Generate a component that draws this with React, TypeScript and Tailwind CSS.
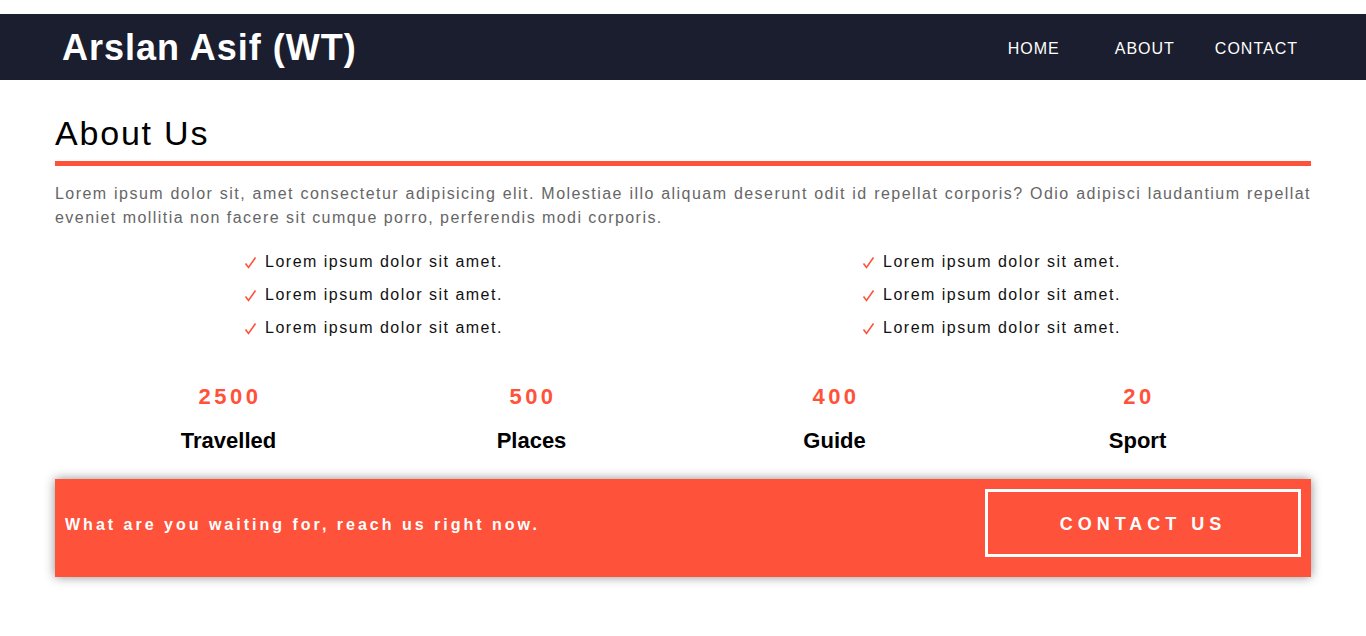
const checks = ["Lorem ipsum dolor sit amet.", "Lorem ipsum dolor sit amet.", "Lorem ipsum dolor sit amet."]

const stats = [
  { num: "2500", label: "Travelled" },
  { num: "500", label: "Places" },
  { num: "400", label: "Guide" },
  { num: "20", label: "Sport" },
]

function CheckList({ className }: { className: string }) {
  return (
    <ul className={className}>
      {checks.map((c, i) => (
        <li key={i} className="flex items-center h-[33px] text-[16px] tracking-[1.5px] text-[#111]">
          <svg width="13" height="13" viewBox="0 0 13 13" className="mr-[8px] mt-[2px]">
            <path d="M1.5 7.5 L4.5 11.5 L11.5 1.5" fill="none" stroke="#ff523b" strokeWidth="1.6" />
          </svg>
          {c}
        </li>
      ))}
    </ul>
  )
}

export default function App() {
  return (
    <div className="min-h-screen bg-white pt-[14px] font-['Liberation_Sans',Arial,sans-serif]">
      <header className="h-[66px] bg-[#1b1e2e] flex items-center justify-between pl-[62px] pr-[68px]">
        <h1 className="text-white text-[36px] font-bold tracking-[1px] leading-none mt-[1px]">Arslan Asif (WT)</h1>
        <nav className="flex items-center text-white text-[16px] tracking-[1px] mt-[4px]">
          <a className="mr-[55px]">HOME</a>
          <a className="mr-[40px]">ABOUT</a>
          <a>CONTACT</a>
        </nav>
      </header>

      <main className="px-[55px]">
        <h2 className="mt-[33px] text-[34px] leading-[40px] tracking-[1.8px] text-black pb-[8px] border-b-[5px] border-[#ff523b]">
          About Us
        </h2>
        <p className="mt-[16px] text-[16px] leading-[24px] tracking-[1.45px] text-[#666] text-justify">
          Lorem ipsum dolor sit, amet consectetur adipisicing elit. Molestiae illo aliquam deserunt odit id repellat
          corporis? Odio adipisci laudantium repellat eveniet mollitia non facere sit cumque porro, perferendis modi
          corporis.
        </p>

        <div className="grid grid-cols-2 mt-[15px]">
          <CheckList className="justify-self-start ml-[189px]" />
          <CheckList className="justify-self-start ml-[179px]" />
        </div>

        <div className="grid grid-cols-4 px-[22px] mt-[40px]">
          {stats.map((s) => (
            <div key={s.label} className="flex flex-col items-center">
              <span className="text-[#ff523b] text-[22px] leading-[26px] font-bold tracking-[3.5px] pl-[3px]">{s.num}</span>
              <span className="mt-[18px] text-[22px] leading-[26px] font-bold text-black">{s.label}</span>
            </div>
          ))}
        </div>

        <div className="mt-[25px] bg-[#ff523b] shadow-[0_0_10px_rgba(0,0,0,0.45)] flex justify-between items-center pl-[10px] pr-[10px] pt-[10px] pb-[20px]">
          <p className="text-white text-[16px] font-bold tracking-[3px] mt-[3px]">What are you waiting for, reach us right now.</p>
          <button className="w-[316px] h-[68px] border-[3px] border-white text-white text-[18px] font-bold tracking-[5px] pt-[2px]">
            CONTACT US
          </button>
        </div>
      </main>
    </div>
  )
}
